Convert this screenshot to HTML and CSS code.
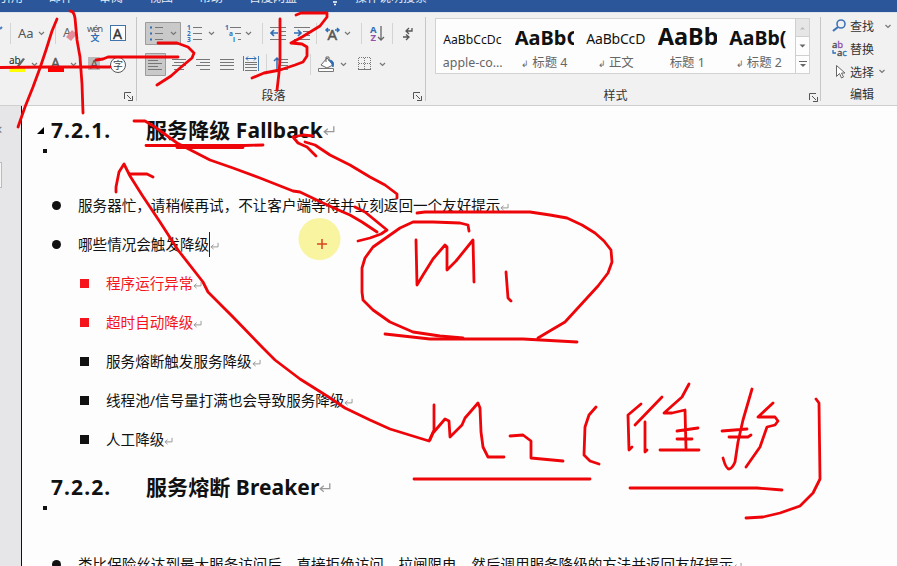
FILE: index.html
```html
<!DOCTYPE html>
<html lang="zh">
<head>
<meta charset="utf-8">
<title>文档</title>
<link rel="stylesheet" href="styles.css">
</head>
<body>
<div class="app">
  <nav class="tabs">
    <span>引用</span><span>邮件</span><span>审阅</span><span>视图</span><span>帮助</span><span class="wide">百度网盘</span>
    <svg class="bulb" width="10" height="12" viewBox="0 0 10 12"><path d="M2 5h6M3 8h4M4 10.500h2" stroke="#fff" stroke-width="1.500"/></svg>
    <span>操作说明搜索</span>
  </nav>
  <header class="ribbon">
    <section class="group font-group">
      <div class="row">
        <svg width="60" height="32" viewBox="0 17 60 32"><path d="M0 29l2-2" stroke="#4a7ebb" stroke-width="2"/><path d="M10.500 23v21M55.500 23v21" stroke="#d4d4d4"/><text x="18" y="38" font-size="13" fill="#555">Aa</text><path d="M39 32l2.500 2.500 2.500-2.500" class="chev"/></svg>
        <svg width="24" height="32" viewBox="60 17 24 32"><text x="63" y="37" font-size="13" fill="#666">A</text><path d="M66 37l6-7 5 4-6 7z" fill="#e58c98"/></svg>
        <svg width="22" height="32" viewBox="84 17 22 32"><text x="87" y="32" font-size="9.500" textLength="16" fill="#555">wén</text><text x="90.500" y="41" font-size="9" font-weight="bold" fill="#2f6eb5">文</text></svg>
        <svg width="28" height="32" viewBox="106 17 28 32"><rect x="110.500" y="25.500" width="15" height="15" fill="#fff" stroke="#3f74ad"/><text x="113" y="38.500" font-size="14" fill="#333" stroke="#333" stroke-width=".4">A</text></svg>
      </div>
      <div class="row">
        <svg width="45" height="34" viewBox="0 49 45 34"><text x="9" y="64" font-size="10" fill="#222">ab</text><path d="M16 67l7-9 2 1-6 8z" fill="#666"/><path d="M9 68h16v4H9z" fill="#ff0"/><path d="M32 63l2.500 2.500 2.500-2.500" class="chev"/></svg>
        <svg width="41" height="34" viewBox="45 49 41 34"><text x="51" y="68" font-size="14" fill="#555" stroke="#555" stroke-width=".4">A</text><path d="M48 68h16v4H48z" fill="red"/><path d="M71 63l2.500 2.500 2.500-2.500" class="chev"/></svg>
        <svg width="48" height="34" viewBox="86 49 48 34"><path d="M88 57h12v13H88z" fill="#bbb"/><text x="90" y="69" font-size="13" fill="#555">A</text><circle cx="118" cy="65" r="7.500" fill="#fff" stroke="#555"/><text x="113" y="69" font-size="10" fill="#444">字</text></svg>
      </div>
      <div class="caption"><svg class="launcher" width="9" height="9" viewBox="0 0 9 9"><path d="M.5 7V.5H7M3 3l4 4M8.500 4v4.500H4M5 8.500h3.500"/></svg></div>
    </section>
    <section class="group para-group">
      <div class="row">
        <svg width="43" height="32" viewBox="140 17 43 32"><path d="M145.500 22.500h35v22h-35z" fill="#c9c9c9" stroke="#9c9c9c"/><path d="M150 27.500h2M150 33.500h2M150 39.500h2" stroke="#2f6eb5" stroke-width="2"/><path d="M155 27.500h8M155 33.500h8M155 39.500h8" stroke="#777"/><path d="M171 32l2.500 2.500 2.500-2.500" class="chev"/></svg>
        <svg width="37" height="32" viewBox="183 17 37 32"><g font-size="6.500" font-weight="bold" fill="#2f6eb5"><text x="187" y="30">1</text><text x="187" y="36">2</text><text x="187" y="42">3</text></g><path d="M193 27.500h9M193 33.500h9M193 39.500h9" stroke="#777"/><path d="M209 32l2.500 2.500 2.500-2.500" class="chev"/></svg>
        <svg width="42" height="32" viewBox="220 17 42 32"><g font-size="6.500" font-weight="bold" fill="#2f6eb5"><text x="225" y="30">1</text><text x="229" y="36">a</text><text x="233" y="42">i</text></g><path d="M230 27.500h11M235 33.500h6M238 39.500h3" stroke="#777"/><path d="M246 32l2.500 2.500 2.500-2.500" class="chev"/></svg>
        <svg width="54" height="32" viewBox="262 17 54 32"><path d="M262.500 23v21" stroke="#d4d4d4"/><path d="M270 27.500h16M279 31.500h7M279 35.500h7M270 39.500h16M294 27.500h16M303 31.500h7M303 35.500h7M294 39.500h16" stroke="#777"/><path d="M278 33h-7m3-3l-3 3 3 3M294 33h7m-3-3l3 3-3 3" fill="none" stroke="#2f6eb5" stroke-width="1.700"/></svg>
        <svg width="45" height="32" viewBox="316 17 45 32"><path d="M316.500 23v21" stroke="#d4d4d4"/><text x="327.500" y="40" font-size="15" fill="#555" stroke="#555" stroke-width=".5">A</text><path d="M330 30h-4m2-2l-2 2 2 2M335 30h4m-2-2l2 2-2 2" fill="none" stroke="#2f6eb5" stroke-width="1.500"/><path d="M345 32l2.500 2.500 2.500-2.500" class="chev"/></svg>
        <svg width="31" height="32" viewBox="361 17 31 32"><path d="M361.500 23v21" stroke="#d4d4d4"/><g font-size="9.500" font-weight="bold"><text x="370" y="33" fill="#2f6eb5">A</text><text x="370.500" y="41" fill="#9252a8">Z</text></g><path d="M381 26v14m-3-3l3 3 3-3" fill="none" stroke="#666" stroke-width="1.300"/></svg>
        <svg width="30" height="32" viewBox="392 17 30 32"><path d="M392.500 23v21" stroke="#d4d4d4"/><path d="M412 28v3h-6m3-3l-3 3 3 3M403 37h6m-3-2.500l3 2.500-3 3" fill="none" stroke="#555" stroke-width="1.300"/></svg>
      </div>
      <div class="row">
        <svg width="50" height="34" viewBox="140 49 50 34"><path d="M145.500 53.500h20v22h-20z" fill="#c9c9c9" stroke="#9c9c9c"/><path d="M148 57.500h14M148 60.500h10M148 63.500h14M148 66.500h10M148 69.500h14M172 59.500h14M174 62.500h10M172 65.500h14M174 69.500h10" stroke="#777"/></svg>
        <svg width="76" height="34" viewBox="190 49 76 34"><path d="M196 59.500h14M200 62.500h10M196 65.500h14M200 69.500h10M220 59.500h14M220 62.500h14M220 65.500h14M220 69.500h14M245 62.500h12M245 64.500h12M245 67.500h12M245 70.500h12" stroke="#777"/><path d="M243.500 56v15M258.500 56v15" stroke="#4a7ebb"/><path d="M246 58.500h10m-8-2l-2 2 2 2m6-4l2 2-2 2" fill="none" stroke="#2f6eb5"/></svg>
        <svg width="44" height="34" viewBox="266 49 44 34"><path d="M266.500 54v21" stroke="#d4d4d4"/><path d="M281 59.500h7M281 62.500h7M281 65.500h7M281 69.500h7" stroke="#777"/><path d="M277 58v13m-3-10l3-3 3 3" fill="none" stroke="#2f6eb5" stroke-width="1.500"/></svg>
        <svg width="45" height="34" viewBox="310 49 45 34"><path d="M310.500 54v21" stroke="#d4d4d4"/><path d="M321 65l6-7 6 7-6 3z" fill="#fff" stroke="#666"/><path d="M326 62v-5h3v4" fill="none" stroke="#666"/><path d="M329 60q6 0 4 7q-1-4-4-7" fill="#2f6eb5" stroke="#2f6eb5"/><path d="M318.500 68.500h15v3h-15z" fill="#fff" stroke="#777"/><path d="M341 63l2.500 2.500 2.500-2.500" class="chev"/></svg>
        <svg width="40" height="34" viewBox="355 49 40 34"><path d="M359 57.500h12M359 63.500h12M358.500 58v12M364.500 58v12M370.500 58v12" stroke="#777" stroke-dasharray="1 1"/><path d="M358 69.500h13" stroke="#777"/><path d="M380 63l2.500 2.500 2.500-2.500" class="chev"/></svg>
      </div>
      <div class="caption">段落<svg class="launcher" width="9" height="9" viewBox="0 0 9 9"><path d="M.5 7V.5H7M3 3l4 4M8.500 4v4.500H4M5 8.500h3.500"/></svg></div>
    </section>
    <section class="group style-group">
      <div class="gallery">
        <div class="style"><b class="s1">AaBbCcDc</b><small>apple-co...</small></div>
        <div class="style"><b class="s2">AaBbC</b><small><i>↲</i> 标题 4</small></div>
        <div class="style"><b class="s3">AaBbCcD</b><small><i>↲</i> 正文</small></div>
        <div class="style"><b class="s4">AaBb</b><small>标题 1</small></div>
        <div class="style"><b class="s5">AaBb(</b><small><i>↲</i> 标题 2</small></div>
        <div class="scroller">
          <span class="off"><svg width="7" height="4" viewBox="0 0 7 4"><path d="M1 3.500L3.500 1 6 3.500z" fill="#bbb"/></svg></span>
          <span><svg width="7" height="4" viewBox="0 0 7 4"><path d="M.5.500h6L3.500 3.500z" fill="#666"/></svg></span>
          <span><svg width="8" height="7" viewBox="0 0 8 7"><path d="M0 .5h8" stroke="#666"/><path d="M1 3h6L4 6z" fill="#666"/></svg></span>
        </div>
      </div>
      <div class="caption">样式<svg class="launcher" width="9" height="9" viewBox="0 0 9 9"><path d="M.5 7V.5H7M3 3l4 4M8.500 4v4.500H4M5 8.500h3.500"/></svg></div>
    </section>
    <section class="group edit-group">
      <div class="cmd"><svg width="18" height="16" viewBox="0 0 18 16"><circle cx="9" cy="6" r="4" fill="none" stroke="#3f74b5" stroke-width="1.600"/><path d="M6 9l-5 4" stroke="#3f74b5" stroke-width="2.200"/></svg>查找<svg class="gap" width="6" height="5" viewBox="0 0 6 5"><path d="M.5 1L3 3.500 5.500 1" class="chev"/></svg></div>
      <div class="cmd"><svg width="18" height="18" viewBox="0 0 18 18"><g font-size="9.500" stroke-width=".3"><text x="0" y="8" fill="#444" stroke="#444">a<tspan fill="#9252a8" stroke="#9252a8">b</tspan></text><text x="5" y="16" fill="#444" stroke="#444">a<tspan fill="#2f6eb5" stroke="#2f6eb5">c</tspan></text></g><path d="M1 10v3h3" fill="none" stroke="#2f6eb5" stroke-width="1.300"/></svg>替换</div>
      <div class="cmd"><svg width="18" height="16" viewBox="0 0 18 16"><path d="M4.500 1.500v11l3-3 2 4.500 2-1-2-4h3.500z" fill="#fff" stroke="#666"/></svg>选择<svg class="near" width="6" height="5" viewBox="0 0 6 5"><path d="M.5 1L3 3.500 5.500 1" class="chev"/></svg></div>
      <div class="caption">编辑</div>
    </section>
  </header>
  <main class="work">
    <aside class="pane"><span class="x">×</span><span class="field"></span></aside>
    <article class="page">
      <h2><svg class="fold" width="9" height="9" viewBox="0 0 9 9"><path d="M8 1v7H1z"/></svg><span class="num">7.2.1.</span><span class="title">服务降级 Fallback</span><svg class="ret big" viewBox="0 0 10 9"><path d="M9 1v4.500H1M4 3L1 5.500 4 8"/></svg></h2>
      <div class="dot"></div>
      <ul class="outer first">
        <li><span>服务器忙，请稍候再试，不让客户端等待并立刻返回一个友好提示</span><svg class="ret" viewBox="0 0 10 9"><path d="M9 1v4.500H1M4 3L1 5.500 4 8"/></svg></li>
        <li><span>哪些情况会触发降级</span><i class="caret"></i><svg class="ret" viewBox="0 0 10 9"><path d="M9 1v4.500H1M4 3L1 5.500 4 8"/></svg></li>
      </ul>
      <ul class="inner">
        <li class="hot"><span>程序运行异常</span><svg class="ret" viewBox="0 0 10 9"><path d="M9 1v4.500H1M4 3L1 5.500 4 8"/></svg></li>
        <li class="hot"><span>超时自动降级</span><svg class="ret" viewBox="0 0 10 9"><path d="M9 1v4.500H1M4 3L1 5.500 4 8"/></svg></li>
        <li><span>服务熔断触发服务降级</span><svg class="ret" viewBox="0 0 10 9"><path d="M9 1v4.500H1M4 3L1 5.500 4 8"/></svg></li>
        <li><span>线程池/信号量打满也会导致服务降级</span><svg class="ret" viewBox="0 0 10 9"><path d="M9 1v4.500H1M4 3L1 5.500 4 8"/></svg></li>
        <li><span>人工降级</span><svg class="ret" viewBox="0 0 10 9"><path d="M9 1v4.500H1M4 3L1 5.500 4 8"/></svg></li>
      </ul>
      <h2 class="second"><span class="num">7.2.2.</span><span class="title">服务熔断 Breaker</span><svg class="ret big" viewBox="0 0 10 9"><path d="M9 1v4.500H1M4 3L1 5.500 4 8"/></svg></h2>
      <div class="dot"></div>
      <ul class="outer last">
        <li><span>类比保险丝达到最大服务访问后，直接拒绝访问，拉闸限电，然后调用服务降级的方法并返回友好提示</span><svg class="ret" viewBox="0 0 10 9"><path d="M9 1v4.500H1M4 3L1 5.500 4 8"/></svg></li>
      </ul>
    </article>
  </main>
  <svg class="ink" width="897" height="566" viewBox="0 0 897 566">
    <circle cx="319.500" cy="239" r="21" class="halo"/>
    <path d="M317 244h10M322 239v10" class="cross"/>
    <!-- letter A and arrow to letter B -->
    <path d="M57 19L52 31 46 50 40 68 33 87 25 107 18 127M70 11q4 0 5 7l2 22 3 17 2 27 1 29"/>
    <path d="M0 67.500L48 67 110 67M96 60l7-1 5-2h70M158 43h19l11 4 6 6-2 5-12 10-9 8-14 9"/>
    <path d="M280 19v40l-1 14-2 17M296 15l5-2h26v4l-7 9-18 11-11 6 11 1 5 3v9l-4 6-8 3-15 5-16 3-12 5"/>
    <!-- heading underline -->
    <path d="M146 145.500h98M177 147.500h66M244 145.500l19-.5"/>
    <!-- A to M1 -->
    <path d="M134 121L145 121 155 127 177 143 210 160 233 168 260 178 293 191 300 192 323 203 343 212 350 215 362 222 377 232M355 207L365 212 387 230 381 234 370 238 358 241"/>
    <!-- M1 back to heading -->
    <path d="M397 198V194L385 185 370 177 350 165 330 155 315 145 305 142M316 156L307 147 298 143 293 137 303 135 313 136"/>
    <!-- M1 -->
    <path d="M417 213L425 212H530L550 215 567 218 582 225 595 233 604 241 611 250 612 262 608 273 598 286 587 298 565 322 548 332 538 338M469 231L468 225 460 223 433 222H413L400 228 373 247 365 258 362 268V292L363 300 373 310 390 322 413 332 440 336 463 338"/>
    <path d="M385 334L430 339H523L577 342"/>
    <path d="M416 240L417 285 423 275 433 259 445 245 447 247 447 270 456 261 473 240 474 282M506 272L508 298 511 301"/>
    <!-- M2 to heading -->
    <path d="M434 405L434 430 429 441 390 429 370 420 345 408 327 396 300 379 275 360 263 348 233 317 208 292 203 282 178 250 160 222 142 195 130 176 124 164 119 172 116 187V192M130 174H147L153 177"/>
    <path d="M430 440L433 433 445 419 449 421 450 437 462 425 465 418 478 403 480 408 481 432 483 447 488 457H504M510 436L523 435 531 441V458L563 461"/>
    <path d="M596 407L589 415 585 427 584 455 590 461 599 464M414 479H590"/>
    <!-- handwritten note in brackets -->
    <path d="M641 404L628 415 629 450 632 447M662 397L635 425M645 422V452L647 450M689 384L682 397 664 413H672L685 410 686 449M677 431L698 428M677 439H692M660 450H699"/>
    <path d="M752 389L743 420 738 442 735 462Q732 469 729 469T723 458M722 431L747 429M729 437H748L751 435M773 403L758 417H775L778 421 775 425 767 427 760 447 746 467"/>
    <path d="M816 399L819 403 820 479 813 493 800 506 780 513 763 517 746 518M630 488H757L782 490"/>
  </svg>
</div>
</body>
</html>
```
FILE: styles.css
```css
* { box-sizing: border-box; }
body { margin: 0; width: 897px; height: 566px; overflow: hidden; font-family: "Noto Sans", "Noto Sans CJK SC", sans-serif; }
.app { position: relative; width: 897px; height: 566px; overflow: hidden; background: #fdfdfd; }
svg { display: block; flex: none; overflow: visible; }
.chev { fill: none; stroke: #777; stroke-width: 1.2; }

.tabs { height: 12px; background: #2b579a; color: #e4ebf5; display: flex; gap: 26px; overflow: hidden; font-size: 12px; line-height: 16px; white-space: nowrap; }
.tabs span { margin-top: -10px; width: 24px; position: relative; left: -1px; }
.tabs .wide { width: 50px; }
.tabs .bulb { margin: -6px -10px 0 4px; }

.ribbon { height: 94px; background: #f1f1f2; border-bottom: 1px solid #cfcfcf; border-top: 1px solid #dfe4ec; display: flex; padding-top: 4px; }
.group { display: flex; flex-direction: column; height: 84px; }
.row { display: flex; height: 32px; }
.row + .row { height: 34px; }
.caption { font-size: 12px; line-height: 19px; color: #333; text-align: center; position: relative; height: 20px; margin-top: 3px; }
.launcher { position: absolute; right: 3px; top: 6px; fill: none; stroke: #555; }
.font-group { width: 137px; border-right: 1px solid #c6c6c6; }
.para-group { width: 289px; border-right: 1px solid #c6c6c6; padding-left: 3px; }
.para-group .caption { padding-right: 18px; }
.style-group { width: 395px; border-right: 1px solid #c6c6c6; padding-left: 9px; }
.style-group .caption { margin-top: 8px; padding-right: 24px; width: 385px; line-height: 28px; }
.style-group .launcher { right: 2px; top: 11px; }
.gallery { width: 375px; height: 60px; border: 1px solid #d2d2d2; background: #fdfdfd; display: flex; margin-top: 1px; padding-left: 1px; }
.style { width: 71.5px; display: flex; flex-direction: column; align-items: center; }
.style b { width: 59px; height: 34px; overflow: hidden; font-weight: 400; color: #111; white-space: nowrap; line-height: 41px; }
.style b.s1 { font-size: 12.2px; }
.style b.s2 { font: bold 20px/38px "Noto Sans", sans-serif; }
.style b.s3 { font-size: 14px; line-height: 39px; letter-spacing: -.2px; }
.style b.s4 { font-size: 23.5px; font-weight: 700; line-height: 34px; }
.style b.s5 { font-size: 19.500px; font-weight: 700; line-height: 38px; }
.style small { font-size: 12.400px; line-height: 19px; color: #666; white-space: nowrap; }
.style small i { font-style: normal; font-size: 9px; }
.scroller { width: 14px; margin-left: auto; display: flex; flex-direction: column; border-left: 1px solid #cfcfcf; }
.scroller span { flex: 1; display: flex; align-items: center; justify-content: center; border-bottom: 1px solid #cfcfcf; }
.scroller span:last-child { border-bottom: 0; }
.scroller .off { background: #e6e6e6; }
.edit-group { padding-left: 11px; width: 76px; margin-top: -2px; }
.cmd { display: flex; flex: none; align-items: center; height: 22.7px; font-size: 12px; color: #333; white-space: nowrap; }
.cmd .gap { margin-left: 11px; }
.cmd .near { margin-left: 5px; }
.edit-group .caption { flex: none; margin-top: 0; width: 63px; line-height: 24px; text-align: right; padding-right: 21px; }

.work { display: flex; height: 460px; }
.pane { width: 22px; background: #e6e6e8; border-right: 1px solid #111; display: flex; flex-direction: column; overflow: hidden; }
.x { color: #777; font-size: 15px; line-height: 20px; margin: 13px 0 0 -6px; }
.field { width: 8px; height: 26px; margin: 23px 0 0 -6px; background: #f6f6f6; border: 1px solid #bbb; }
.page { flex: 1; overflow: hidden; color: #111; }
h2 { display: flex; align-items: center; margin: 9px 0 0 29px; height: 30px; font-size: 21px; line-height: 30px; font-weight: 700; white-space: nowrap; }
.fold { margin: 0 6px 0 -15px; }
.num { width: 95px; letter-spacing: 1.100px; }
.title { letter-spacing: .08px; }
.ret { width: 9px; height: 8px; fill: none; stroke: #999; stroke-width: 1.1; margin-top: 2px; }
.ret.big { width: 12px; height: 11px; margin-top: 0; }
.dot { width: 4px; height: 4px; background: #111; margin: 4px 0 0 21px; }
ul { list-style: none; margin: 0; padding: 0; font-size: 14.570px; }
li { display: flex; align-items: center; height: 39px; white-space: nowrap; }
li span { margin-top: -3px; }
li::before { content: ""; flex: none; background: currentColor; }
.outer { padding-left: 30px; }
.outer li::before { width: 9px; height: 9px; border-radius: 50%; margin-right: 17px; }
.first { margin-top: 33px; }
.inner { padding-left: 58px; }
.inner li::before { width: 9px; height: 9px; margin-right: 17px; }
.hot { color: #f5141c; }
.caret { width: 1px; height: 25px; background: #222; }
.second { margin-top: 13px; }
.last { margin-top: 35px; }

.ink { position: absolute; left: 0; top: 0; pointer-events: none; fill: none; stroke: #ee0509; stroke-width: 2.800; stroke-linecap: round; stroke-linejoin: round; }
.ink .halo { fill: #f5ee60; fill-opacity: .6; stroke: none; }
.ink .cross { stroke: #d9441c; stroke-width: 1.500; stroke-linecap: butt; }
```
